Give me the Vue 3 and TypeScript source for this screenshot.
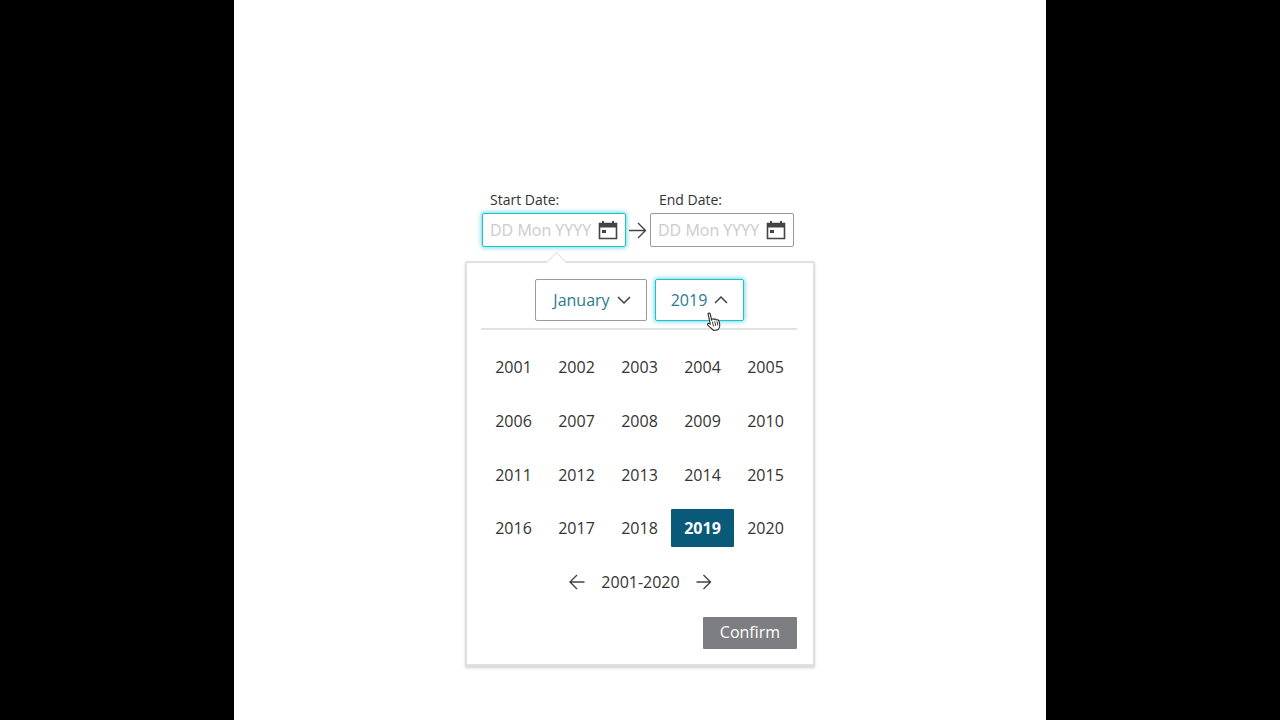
<script setup lang="ts">
const years: number[] = Array.from({ length: 20 }, (_, i) => 2001 + i)
const selected = 2019
</script>

<template>
  <div class="page">
    <div class="picker">
      <div class="fields">
        <div class="field">
          <label class="label">Start Date:</label>
          <div class="input focus">
            <span class="placeholder">DD Mon YYYY</span>
            <svg class="cal" width="20" height="20" viewBox="0 0 20 20">
              <path d="M1.5 3.5h17v15h-17z" fill="none" stroke="#444" stroke-width="1.6" />
              <path d="M1 3h18v4.5H1z" fill="#444" />
              <path d="M5 1v3M15 1v3" stroke="#444" stroke-width="2" />
              <path d="M4 10h4v3H4z" fill="#444" />
            </svg>
          </div>
        </div>
        <svg class="arrow-between" width="24" height="34" viewBox="0 0 24 34">
          <path d="M3 17.5h16M12 10l7.500 7.500L12 25" fill="none" stroke="#444" stroke-width="1.4" />
        </svg>
        <div class="field">
          <label class="label end">End Date:</label>
          <div class="input">
            <span class="placeholder">DD Mon YYYY</span>
            <svg class="cal" width="20" height="20" viewBox="0 0 20 20">
              <path d="M1.5 3.5h17v15h-17z" fill="none" stroke="#444" stroke-width="1.6" />
              <path d="M1 3h18v4.5H1z" fill="#444" />
              <path d="M5 1v3M15 1v3" stroke="#444" stroke-width="2" />
              <path d="M4 10h4v3H4z" fill="#444" />
            </svg>
          </div>
        </div>
      </div>

      <div class="panel">
        <span class="caret"></span>
        <div class="selects">
          <div class="select month">
            <span>January</span>
            <svg width="14" height="8" viewBox="0 0 14 8">
              <path d="M1 1l6 6 6-6" fill="none" stroke="#444" stroke-width="1.5" />
            </svg>
          </div>
          <div class="select year focus">
            <span>2019</span>
            <svg width="14" height="8" viewBox="0 0 14 8">
              <path d="M1 7l6-6 6 6" fill="none" stroke="#444" stroke-width="1.5" />
            </svg>
            <svg class="cursor" width="17" height="21" viewBox="0 0 16 20">
              <path d="M4.500 1.500c1-.6 2 0 2 1v6l.5-1c1-.5 1.800 0 2 .8 1-.5 1.800 0 2 .9 1-.3 2 .2 2.200 1.200v3.600c0 2-1 3.500-2.500 4.500H6.500L2 12.500c-.6-1 .4-2.200 1.600-1.500l.9.800V2.500z" fill="#fff" stroke="#333" stroke-width="1.100" stroke-linejoin="round" />
              <path d="M7 10v4.500M9.200 10v4.500M11.300 10.500v4" stroke="#333" stroke-width="0.900" />
            </svg>
          </div>
        </div>
        <div class="divider"></div>
        <div class="grid">
          <div v-for="y in years" :key="y" class="cell" :class="{ active: y === selected }">{{ y }}</div>
        </div>
        <div class="pager">
          <svg width="16" height="16" viewBox="0 0 16 16">
            <path d="M15.500 8H1M8 1L1 8l7 7" fill="none" stroke="#444" stroke-width="1.400" />
          </svg>
          <span class="range">2001-2020</span>
          <svg width="16" height="16" viewBox="0 0 16 16">
            <path d="M.5 8H14.500M7.500 1l7 7-7 7" fill="none" stroke="#444" stroke-width="1.400" />
          </svg>
        </div>
        <div class="actions">
          <button class="confirm" type="button">Confirm</button>
        </div>
      </div>
    </div>
  </div>
</template>

<style>
html, body {
  margin: 0;
  background: #000;
}
</style>

<style scoped>
.page {
  width: 812px;
  height: 720px;
  margin-left: 234px;
  background: #fff;
  display: flex;
  justify-content: center;
  font-family: "Open Sans", "Noto Sans", sans-serif;
  color: #333;
  overflow: hidden;
}
.picker {
  width: 350px;
  padding-top: 190px;
}
.fields {
  display: flex;
  align-items: flex-end;
  padding-left: 17px;
}
.field {
  display: flex;
  flex-direction: column;
}
.label {
  font-size: 14px;
  line-height: 19px;
  height: 23px;
  margin-left: 8px;
}
.label.end {
  margin-left: 9px;
}
.input {
  box-sizing: border-box;
  width: 144px;
  height: 34px;
  border: 1px solid #9b9b9b;
  border-radius: 2px;
  display: flex;
  align-items: center;
  justify-content: space-between;
  padding: 0 7px;
}
.focus {
  border-color: #1fc1cc;
  box-shadow: 0 0 4px 1px rgba(60, 205, 215, 0.7);
}
.placeholder {
  font-size: 16px;
  color: #cbcbcb;
  white-space: nowrap;
}
.cal {
  flex: none;
}
.arrow-between {
  flex: none;
  display: block;
}
.panel {
  position: relative;
  box-sizing: border-box;
  height: 405px;
  margin-top: 14px;
  background: #fff;
  border: 2px solid #e0e0e0;
  border-radius: 2px;
  box-shadow: 0 2px 3px rgba(0, 0, 0, 0.18);
  padding: 16px 16px 15px 14px;
}
.caret {
  position: absolute;
  left: 82px;
  top: -8px;
  width: 14px;
  height: 14px;
  background: #fff;
  border-left: 1px solid #e0e0e0;
  border-top: 1px solid #e0e0e0;
  transform: rotate(45deg);
}
.selects {
  display: flex;
  justify-content: center;
  gap: 8px;
  padding-left: 1px;
}
.select {
  position: relative;
  box-sizing: border-box;
  height: 42px;
  display: flex;
  align-items: center;
  justify-content: center;
  gap: 7px;
  border: 1px solid #9b9b9b;
  border-radius: 2px;
  font-size: 16px;
  color: #2c7a8f;
}
.select.focus {
  border-color: #1fc1cc;
}
.month {
  width: 112px;
  padding-left: 2px;
}
.year {
  width: 89px;
}
.cursor {
  position: absolute;
  left: 49px;
  top: 31px;
  transform: rotate(-12deg);
}
.divider {
  height: 2px;
  margin-top: 7px;
  background: #e2e2e2;
}
.grid {
  display: grid;
  grid-template-columns: repeat(5, 63px);
  grid-auto-rows: 38px;
  row-gap: 15.8px;
  margin: 18px 0 0 1px;
}
.cell {
  display: flex;
  align-items: center;
  justify-content: center;
  font-size: 16px;
  border-radius: 1px;
}
.cell.active {
  background: #085a78;
  color: #fff;
  font-weight: 700;
}
.pager {
  display: flex;
  align-items: center;
  justify-content: center;
  gap: 16px;
  height: 22px;
  margin-top: 24px;
  padding-left: 3px;
}
.range {
  font-size: 16px;
  line-height: 22px;
}
.actions {
  display: flex;
  justify-content: flex-end;
  margin-top: 24px;
}
.confirm {
  width: 94px;
  height: 32px;
  padding: 0 0 2px;
  border: none;
  border-radius: 1px;
  background: #7d7e82;
  color: #fff;
  font-family: inherit;
  font-size: 16px;
}
</style>
